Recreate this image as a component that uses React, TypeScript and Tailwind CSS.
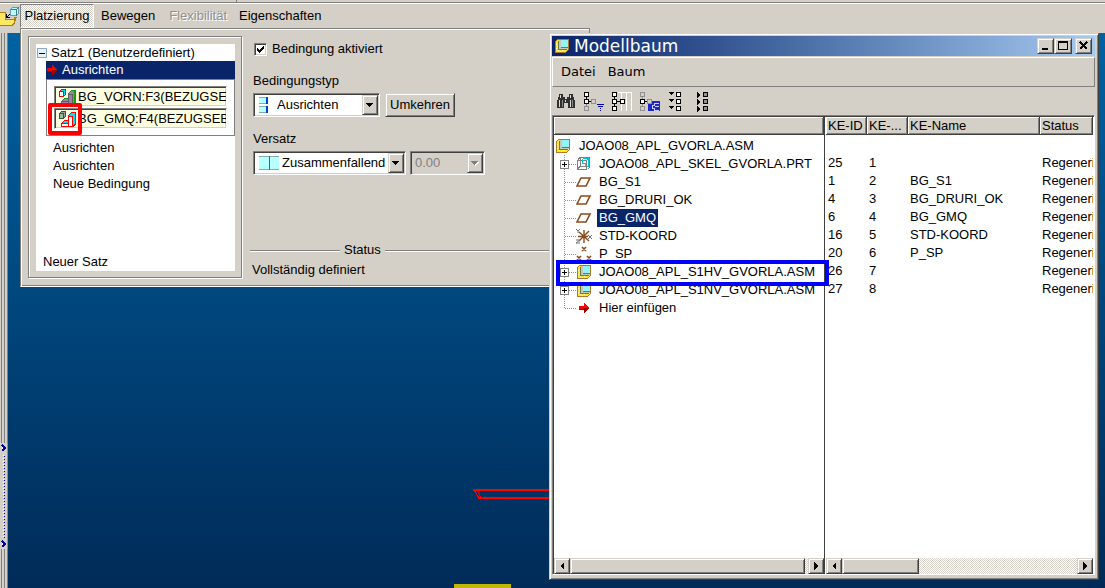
import { useState } from 'react';
import type { ReactNode } from 'react';

const RAISED =
  'border border-t-[#d4d0c8] border-l-[#d4d0c8] border-r-[#404040] border-b-[#404040] bg-[#d4d0c8] shadow-[inset_1px_1px_#fff,inset_-1px_-1px_#808080]';
const SUNKEN =
  'border border-t-[#808080] border-l-[#808080] border-r-white border-b-white shadow-[inset_1px_1px_#404040,inset_-1px_-1px_#d4d0c8]';
const DITHER = 'bg-[repeating-conic-gradient(#fff_0_25%,#d4d0c8_0_50%)] bg-[length:2px_2px]';

type NodeKind = 'assembly' | 'skeleton' | 'plane' | 'csys' | 'points' | 'insert';

interface TreeNode {
  label: string;
  kind: NodeKind;
  expandable?: boolean;
  selected?: boolean;
  marked?: boolean;
}

const nodes: TreeNode[] = [
  { label: 'JOAO08_APL_SKEL_GVORLA.PRT', kind: 'skeleton', expandable: true },
  { label: 'BG_S1', kind: 'plane' },
  { label: 'BG_DRURI_OK', kind: 'plane' },
  { label: 'BG_GMQ', kind: 'plane', selected: true },
  { label: 'STD-KOORD', kind: 'csys' },
  { label: 'P_SP', kind: 'points' },
  { label: 'JOAO08_APL_S1HV_GVORLA.ASM', kind: 'assembly', expandable: true, marked: true },
  { label: 'JOAO08_APL_S1NV_GVORLA.ASM', kind: 'assembly', expandable: true },
  { label: 'Hier einfügen', kind: 'insert' },
];

const features = [
  ['25', '1', ''],
  ['1', '2', 'BG_S1'],
  ['4', '3', 'BG_DRURI_OK'],
  ['6', '4', 'BG_GMQ'],
  ['16', '5', 'STD-KOORD'],
  ['20', '6', 'P_SP'],
  ['26', '7', ''],
  ['27', '8', ''],
];

function AssemblyIcon() {
  return (
    <svg className="h-4 w-4 shrink-0" viewBox="0 0 16 16" shapeRendering="crispEdges">
      <path d="M1.500 3.500l2-2h11v10l-3 3h-10z" fill="#ffe820" stroke="#b07828" />
      <path d="M2 6h1v1H2zM3 8h1v1H3zM2 10h1v1H2zM4 12h1v1H4zM6 13h1v1H6zM8 12h1v1H8z" fill="#fffbc0" />
      <path d="M5 2h9v9H5z" fill="#c8c8b8" />
      <path d="M7 2h7v7H7z" fill="#8ff5f5" />
      <path d="M7 9h7v1H7zM5 11h8v1H5zM4 3h1v9H4z" fill="#6a7a50" />
    </svg>
  );
}

function RedArrow() {
  return (
    <svg className="h-3 w-3 shrink-0" viewBox="0 0 12 12" shapeRendering="crispEdges">
      <path d="M1 4h5V0l5 6-5 5V8H1z" fill="#ff0000" />
      <path d="M1 7h5V6h5l-5 5V8H1z" fill="#a00000" />
    </svg>
  );
}

function NodeIcon({ kind }: { kind: NodeKind }) {
  if (kind === 'assembly') return <AssemblyIcon />;
  if (kind === 'insert') {
    return (
      <span className="flex w-4 justify-center">
        <RedArrow />
      </span>
    );
  }
  return (
    <svg className="h-4 w-4 shrink-0" viewBox="0 0 16 16" shapeRendering="crispEdges" fill="none">
      {kind === 'skeleton' && (
        <>
          <path d="M1.500 4.500h9v9h-9zM2 3.500l2-2h9.500v10l-2 2M11 4l2-2M4.500 2v8h9M4 10.500l-2 2" stroke="#808080" />
          <path d="M6.500 3v4h3v4M12.500 3v8M7 2.500h6" stroke="#00c8d8" />
        </>
      )}
      {kind === 'plane' && <path d="M5 4h9l-4 8H1z" stroke="#8b4a1c" strokeWidth="1.6" shapeRendering="auto" />}
      {kind === 'csys' && (
        <>
          <path d="M8 2v13M2 8.500h10M3 4l10 9M13 3L3 13" stroke="#8b4a1c" strokeWidth="1.4" shapeRendering="auto" />
          <path d="M0 1l2 2 2-2M2 3v2M12 7l4 4M16 7l-4 4M0 12h4l-4 3h4" stroke="#707070" shapeRendering="auto" />
        </>
      )}
      {kind === 'points' && (
        <path d="M6 1l4 4M10 1l-4 4M1 10l4 4M5 10l-4 4M11 10l4 4M15 10l-4 4" stroke="#8b4a1c" strokeWidth="1.6" shapeRendering="auto" />
      )}
    </svg>
  );
}

function ReferenceIcon({ active }: { active: boolean }) {
  const cube = active ? '#405040' : '#ff0000';
  const body = active ? '#ff0000' : '#606060';
  return (
    <svg className="h-4 w-[17px] shrink-0" viewBox="0 0 17 16" shapeRendering="crispEdges">
      <path d="M0.500 2.500l2-2h4v5l-2 2h-4z" fill={active ? '#a0a0a0' : '#00e0f0'} stroke={cube} />
      <path d="M0.500 2.500h4v5h-4z" fill={active ? '#90c090' : '#fff'} stroke={cube} />
      <path d="M2.500 12.500l3-3h4v6h-7z" fill={active ? '#00e0f0' : '#a080a8'} stroke={body} />
      <path d="M2.500 12.500h7v3h-7z" fill={active ? '#fff' : '#a080a8'} stroke={body} />
      <path d="M9.500 4.500l3-3h3.500v12l-2 2H9.500z" fill={active ? '#00e0f0' : '#a080a8'} stroke={body} />
      <path d="M9.500 5.500h4v10h-4z" fill={active ? '#fff' : '#a080a8'} stroke={body} />
      {!active && <path d="M15.500 1.500v12M5 9.500h4M12 1.500h4" stroke="#10a010" />}
    </svg>
  );
}

function Box({ x, y, color = '#000', fill = '#fff' }: { x: number; y: number; color?: string; fill?: string }) {
  return <rect x={x + 0.5} y={y + 0.5} width="4" height="4" fill={fill} stroke={color} />;
}

function ToolButton({ label, children }: { label: string; children: ReactNode }) {
  return (
    <button type="button" aria-label={label} className="h-6 w-7">
      <svg className="h-6 w-7" viewBox="0 0 28 24" shapeRendering="crispEdges">
        {children}
      </svg>
    </button>
  );
}

function Toolbar() {
  return (
    <div className="flex h-7 items-center pl-[2px]">
      <ToolButton label="Suchen">
        <path d="M5 5h4v3h2v2h2V8h2V5h4v3h1v3h1v8h-7v-5h-4v5H3v-8h1V8h1z" fill="#303030" />
        <path d="M6 6h1v3H6zM5 11h1v7H5zM16 6h1v3h-1zM16 11h1v7h-1zM11 11h1v2h-1z" fill="#e0dcd4" />
        <path d="M8 11h1v7H8zM18 11h1v7h-1z" fill="#888" />
      </ToolButton>
      <ToolButton label="Filter">
        <path d="M4.500 7v3M7 12.500h3" stroke="#000" />
        <path d="M4.500 15v3" stroke="#808080" />
        <Box x={2} y={3} />
        <Box x={2} y={10} />
        <Box x={2} y={17} color="#909090" fill="#d4d0c8" />
        <Box x={9} y={10} color="#909090" fill="#d4d0c8" />
        <path d="M15 15h7v1h-7zM16 17h5v1h-5zM18 19h1v1h-1zM18 21h1v1h-1z" fill="#0000a0" />
      </ToolButton>
      <ToolButton label="Spalten">
        <path d="M8 3.500h14M11.500 3v19M16.500 3v19M21.500 3v19" stroke="#fff" />
        <path d="M4.500 7v3M7 12.500h3M4.500 15v3" stroke="#000" />
        <Box x={2} y={3} />
        <Box x={2} y={10} />
        <Box x={2} y={17} />
        <Box x={10} y={10} />
      </ToolButton>
      <ToolButton label="Auswahl">
        <path d="M4.500 7v3M4.500 15v3" stroke="#909090" />
        <path d="M7 12.500h3" stroke="#000" />
        <Box x={2} y={3} color="#909090" fill="#d4d0c8" />
        <Box x={2} y={10} />
        <Box x={2} y={17} color="#909090" fill="#d4d0c8" />
        <Box x={9} y={10} color="#909090" fill="#d4d0c8" />
        <path d="M14 12h8v10H10v-7h4z" fill="#2028c0" />
        <path d="M21 14h-5v2h-2v3h2v2h5M17 17h4" fill="none" stroke="#c8d0ff" />
      </ToolButton>
      <ToolButton label="Alles einblenden">
        {[3, 10, 17].map((y) => (
          <g key={y}>
            <path d={`M2 ${y}h6l-3 3z`} fill="#000" />
            <Box x={10} y={y} />
          </g>
        ))}
      </ToolButton>
      <ToolButton label="Alles ausblenden">
        {[3, 10, 17].map((y) => (
          <g key={y}>
            <path d={`M3 ${y}l3 3-3 3z`} fill="#000" />
            <Box x={9} y={y} fill="#909090" />
          </g>
        ))}
      </ToolButton>
    </div>
  );
}

interface ComboProps {
  label: string;
  value: string;
  width: string;
  icon?: ReactNode;
  disabled?: boolean;
}

function Combo({ label, value, width, icon, disabled }: ComboProps) {
  return (
    <div className={`flex h-6 items-center p-px ${width} ${SUNKEN} ${disabled ? 'bg-[#d4d0c8]' : 'bg-white'}`}>
      {icon}
      <select
        aria-label={label}
        disabled={disabled}
        className="h-5 min-w-0 flex-1 appearance-none pl-[3px] text-black outline-none disabled:text-[#808080] disabled:opacity-100"
      >
        <option>{value}</option>
      </select>
      <span className={`flex h-5 w-4 shrink-0 items-center justify-center ${RAISED}`}>
        <svg className="h-2 w-2" viewBox="0 0 8 8" shapeRendering="crispEdges">
          {disabled && <path d="M1 3h7L4.500 7z" fill="#fff" />}
          <path d="M0 2h7L3.500 6z" fill={disabled ? '#808080' : '#000'} />
        </svg>
      </span>
    </div>
  );
}

function ConstraintList() {
  return (
    <div className="w-[214px] shrink-0 border border-[#808080] p-[7px] pr-[6px] pb-[6px] shadow-[1px_1px_#fff,inset_1px_1px_#fff]">
      <div className="flex h-full flex-col bg-white">
        <div className="flex h-[17px] items-center gap-1 pt-px pl-px">
          <svg className="h-[10px] w-[10px]" viewBox="0 0 10 10" shapeRendering="crispEdges">
            <rect x="0.500" y="0.500" width="9" height="9" fill="#e8f2fa" stroke="#8aa8c8" />
            <path d="M2 5.500h6" stroke="#000" />
          </svg>
          <span>Satz1 (Benutzerdefiniert)</span>
        </div>
        <div className="ml-[10px] flex h-[18px] items-center gap-1 bg-[#0a246a] text-white">
          <RedArrow />
          <span>Ausrichten</span>
        </div>
        <div className="ml-[10px] flex flex-col gap-px border border-[#808080] px-[7px] py-[6px]">
          {['BG_VORN:F3(BEZUGSEBENE)', 'BG_GMQ:F4(BEZUGSEBENE)'].map((name, i) => (
            <div key={name} className="relative">
              <div className={`flex h-[21px] items-center gap-[2px] overflow-hidden bg-[#ffffe1] pl-1 whitespace-nowrap ${SUNKEN}`}>
                <ReferenceIcon active={i === 1} />
                <span>{name}</span>
              </div>
              {i === 1 && <div className="absolute -top-[5px] -left-[6px] h-8 w-[34px] rounded-xs border-4 border-[#ff0000]" />}
            </div>
          ))}
        </div>
        <ul className="mt-[3px] pl-[17px] leading-[18px]">
          <li>Ausrichten</li>
          <li>Ausrichten</li>
          <li>Neue Bedingung</li>
        </ul>
        <div className="mt-auto pb-px pl-[7px] leading-4">Neuer Satz</div>
      </div>
    </div>
  );
}

function PlacementPanel() {
  const [enabled, setEnabled] = useState(true);
  return (
    <section className="absolute top-7 left-5 flex h-[259px] w-[570px] border border-t-[#808080] border-r-[#808080] border-l-[#808080] border-b-white bg-[#d4d0c8] p-[7px] pb-2 shadow-[inset_1px_1px_#fff,inset_0_-1px_#808080]">
      <ConstraintList />
      <div className="flex flex-1 flex-col pl-[11px]">
        <label className="mt-[5px] flex h-4 items-center gap-[5px] pl-px">
          <span className="relative flex h-[13px] w-[13px]">
            <input
              type="checkbox"
              checked={enabled}
              onChange={() => setEnabled(!enabled)}
              className={`h-[13px] w-[13px] appearance-none bg-white ${SUNKEN}`}
            />
            {enabled && (
              <svg className="pointer-events-none absolute inset-0" viewBox="0 0 13 13" shapeRendering="crispEdges">
                <path d="M3 5v3l2 2 5-5V2L5 7z" fill="#000" />
              </svg>
            )}
          </span>
          Bedingung aktiviert
        </label>
        <span className="mt-4 leading-4">Bedingungstyp</span>
        <div className="mt-1 flex gap-[5px]">
          <Combo
            label="Bedingungstyp"
            value="Ausrichten"
            width="w-[127px]"
            icon={
              <svg className="mr-[6px] h-4 w-[13px] shrink-0" viewBox="0 0 13 16" shapeRendering="crispEdges">
                <path d="M4 0h7v7H4zM4 9h7v7H4z" fill="#b8ffff" />
                <path d="M4 0.500h7M4 15.500h7M4 6.500h7M4 9.500h7" stroke="#8aa" />
                <path d="M11 0h2v7h-2zM11 9h2v7h-2z" fill="#0040d0" />
              </svg>
            }
          />
          <button type="button" className={`h-6 w-[70px] ${RAISED}`}>
            Umkehren
          </button>
        </div>
        <span className="mt-[14px] leading-4">Versatz</span>
        <div className="mt-1 flex gap-1">
          <Combo
            label="Versatz"
            value="Zusammenfallend"
            width="w-[153px]"
            icon={
              <svg className="ml-1 h-[14px] w-5 shrink-0" viewBox="0 0 20 14" shapeRendering="crispEdges">
                <path d="M0 0h20v14H0z" fill="#b8ffff" />
                <path d="M0 0.500h20M0 13.500h20" stroke="#8aa" />
                <path d="M10.500 0v14" stroke="#506060" />
              </svg>
            }
          />
          <Combo label="Versatzwert" value="0.00" width="w-[75px]" disabled />
        </div>
        <div className="mt-auto -ml-[3px] flex items-center gap-1 leading-4">
          <hr className="w-[90px] border-t-[#808080] shadow-[0_1px_#fff]" />
          Status
          <hr className="flex-1 border-t-[#808080] shadow-[0_1px_#fff]" />
        </div>
        <span className="mt-1 -ml-px leading-4">Vollständig definiert</span>
      </div>
    </section>
  );
}

function ScrollButton({ dir, label }: { dir: 'left' | 'right'; label: string }) {
  return (
    <button type="button" aria-label={label} className={`flex h-4 w-4 shrink-0 items-center justify-center ${RAISED}`}>
      <svg className="h-2 w-2" viewBox="0 0 8 8" shapeRendering="crispEdges">
        <path d={dir === 'left' ? 'M6 0v8L2 4z' : 'M2 0v8l4-4z'} fill="#000" />
      </svg>
    </button>
  );
}

function ScrollBar({ thumb }: { thumb: string }) {
  return (
    <div className={`flex h-4 ${DITHER}`}>
      <ScrollButton dir="left" label="Nach links" />
      <div className={`h-4 ${thumb} ${RAISED}`} />
      <div className="ml-auto flex">
        <ScrollButton dir="right" label="Nach rechts" />
      </div>
    </div>
  );
}

function TreeRow({ node, last }: { node: TreeNode; last: boolean }) {
  return (
    <li className="relative flex h-[18px] items-center">
      <span className="flex h-full w-[22px] shrink-0 items-center pl-[6px]">
        <svg className="h-[18px] w-4" viewBox="0 0 16 18" shapeRendering="crispEdges">
          <path d={last ? 'M4.500 0v9M5 9.500h11' : 'M4.500 0v18M5 9.500h11'} stroke="#909090" strokeDasharray="1 1" />
          {node.expandable && (
            <>
              <rect x="0.500" y="5.500" width="8" height="8" fill="#fff" stroke="#808080" />
              <path d="M2 9.500h5M4.500 7v5" stroke="#000" />
            </>
          )}
        </svg>
      </span>
      <NodeIcon kind={node.kind} />
      <span className={`ml-[5px] px-[2px] leading-[18px] whitespace-nowrap ${node.selected ? 'bg-[#0a246a] text-white' : ''}`}>
        {node.label}
      </span>
      {node.marked && <div className="absolute -top-[3px] left-[2px] z-10 h-[26px] w-[273px] border-4 border-[#0000ff]" />}
    </li>
  );
}

const HEAD_CELL =
  'h-[18px] truncate border-r border-b border-[#404040] bg-[#d4d0c8] pl-[2px] text-left font-normal shadow-[inset_1px_1px_#fff,inset_-1px_-1px_#808080]';

function ModelTreeWindow() {
  return (
    <section className={`absolute top-[33px] right-[6px] bottom-2 left-[549px] flex flex-col p-[2px] pr-[3px] pb-1 ${RAISED}`}>
      <header className="flex h-5 shrink-0 items-center bg-linear-to-r from-[#0a246a] to-[#a6caf0] pr-[3px] pl-[2px] text-white">
        <AssemblyIcon />
        <h1 className="ml-1 flex-1 font-['DejaVu_Sans'] text-[17px] leading-5">Modellbaum</h1>
        <button type="button" aria-label="Minimieren" className={`h-4 w-[17px] ${RAISED}`}>
          <svg viewBox="0 0 15 14" shapeRendering="crispEdges">
            <path d="M4 9h6v2H4z" fill="#000" />
          </svg>
        </button>
        <button type="button" aria-label="Maximieren" className={`mr-[3px] h-4 w-[18px] ${RAISED}`}>
          <svg viewBox="0 0 16 14" shapeRendering="crispEdges">
            <path d="M3 2h10v9H3zM4 4v6h8V4z" fill="#000" fillRule="evenodd" />
          </svg>
        </button>
        <button type="button" aria-label="Schließen" className={`h-4 w-[17px] ${RAISED}`}>
          <svg viewBox="0 0 15 14" shapeRendering="crispEdges">
            <path d="M4 3l7 7M11 3l-7 7" stroke="#000" strokeWidth="2" />
          </svg>
        </button>
      </header>
      <nav className="mt-px flex h-[30px] shrink-0 items-center gap-3 border border-t-white border-r-[#808080] border-b-[#808080] border-l-white pl-2 font-['DejaVu_Sans'] text-[13px]">
        <button type="button">Datei</button>
        <button type="button">Baum</button>
      </nav>
      <Toolbar />
      <div className="flex min-h-0 flex-1 border border-t-[#808080] border-r-white border-b-white border-l-[#808080] bg-white shadow-[inset_1px_1px_#404040]">
        <div className="flex w-[272px] shrink-0 flex-col border-r border-[#404040] pt-px pl-px">
          <div className={HEAD_CELL} />
          <div className="mt-[2px] flex h-[18px] items-center gap-2 pl-px">
            <AssemblyIcon />
            <span>JOAO08_APL_GVORLA.ASM</span>
          </div>
          <ul className="flex-1">
            {nodes.map((node, i) => (
              <TreeRow key={node.label} node={node} last={i === nodes.length - 1} />
            ))}
          </ul>
          <ScrollBar thumb="w-[235px]" />
        </div>
        <div className="flex min-w-0 flex-1 flex-col overflow-hidden pt-px pr-px pl-px">
          <table className="w-full table-fixed border-separate border-spacing-0">
            <thead>
              <tr>
                <th className={`w-[41px] ${HEAD_CELL}`}>KE-ID</th>
                <th className={`w-[41px] ${HEAD_CELL}`}>KE-...</th>
                <th className={`w-[132px] ${HEAD_CELL}`}>KE-Name</th>
                <th className={HEAD_CELL}>Status</th>
              </tr>
            </thead>
            <tbody>
              <tr className="h-[19px]">
                <td colSpan={4} />
              </tr>
              {features.map(([id, nr, name]) => (
                <tr key={id} className="h-[18px] leading-[18px]">
                  <td className="pl-[2px]">{id}</td>
                  <td className="pl-[2px]">{nr}</td>
                  <td className="pl-[2px]">{name}</td>
                  <td className="overflow-hidden pl-[2px] whitespace-nowrap">Regeneriert</td>
                </tr>
              ))}
            </tbody>
          </table>
          <div className="mt-auto">
            <ScrollBar thumb="w-[77px]" />
          </div>
        </div>
      </div>
    </section>
  );
}

function Sash() {
  return (
    <div className="flex w-2 shrink-0 flex-col">
      <div className="flex-1 bg-[linear-gradient(90deg,#d4d0c8_1px,#808080_1px_2px,#d4d0c8_2px_4px,#808080_4px_5px,#d4d0c8_5px_7px,#808080_7px)]" />
      <svg className="h-[106px] w-2 bg-[#d4d0c8]" viewBox="0 0 8 106" shapeRendering="crispEdges">
        <path d="M2 2l3 3-3 3M2 98l3 3-3 3" fill="#fff" stroke="#0000a0" strokeWidth="1.5" />
        <path d="M3.500 12v82" stroke="#fff" strokeDasharray="1 2" />
        <path d="M4.500 13v82" stroke="#0000a0" strokeDasharray="1 2" />
        <path d="M7.500 0v106" stroke="#909090" />
      </svg>
      <div className="h-[39px] bg-[linear-gradient(90deg,#d4d0c8_1px,#808080_1px_2px,#d4d0c8_2px_4px,#808080_4px_5px,#d4d0c8_5px_7px,#808080_7px)]" />
    </div>
  );
}

export default function App() {
  return (
    <div className="relative flex min-h-screen flex-col overflow-hidden bg-[#d4d0c8] font-['Liberation_Sans',Arial,sans-serif] text-[13px] leading-4 text-black">
      <div className="flex h-[3px] border-b border-[#808080]">
        <div className="w-[237px] border-r border-[#808080]" />
      </div>
      <nav className="flex h-[30px] items-start border-t border-white">
        <svg className="mr-px h-6 w-[19px]" viewBox="0 0 19 24" shapeRendering="crispEdges">
          <path d="M-1 8.500h6v7h9v-2h2l-2 6-2 2H-1z" fill="#ffe860" stroke="#b08000" />
          <path d="M10.500 5.500l2-2h6v6l-2 2h-6z" fill="#b8ffff" stroke="#60a0b0" />
          <path d="M16.500 5.500v6M10.500 5.500h6l2-2" fill="none" stroke="#407888" />
          <path d="M10 10l-3 3M6.500 10v4M6 13.500h4" fill="none" stroke="#000" />
        </svg>
        <button type="button" className={`h-6 w-[74px] border border-r-white border-b-white border-t-[#808080] border-l-[#808080] ${DITHER}`}>
          Platzierung
        </button>
        <button type="button" className="ml-[7px] h-6">Bewegen</button>
        <button type="button" disabled className="ml-[14px] h-6 text-[#909090] [text-shadow:1px_1px_#fff]">
          Flexibilität
        </button>
        <button type="button" className="ml-3 h-6">Eigenschaften</button>
      </nav>
      <main className="flex flex-1">
        <Sash />
        <div className="flex flex-1 flex-col justify-end bg-linear-to-b from-[#0062a2] to-[#002b58]">
          <svg className="ml-[465px] h-3 w-20" viewBox="0 0 80 12" shapeRendering="crispEdges" fill="none" stroke="#ff0000">
            <path d="M0 2h80M5 10h75" strokeWidth="2" />
            <path d="M1 2l5 8M4 2l4 8" />
          </svg>
          <div className="mt-[84px] ml-[446px] h-1 w-[57px] bg-[#c0b800]" />
        </div>
      </main>
      <PlacementPanel />
      <ModelTreeWindow />
    </div>
  );
}
